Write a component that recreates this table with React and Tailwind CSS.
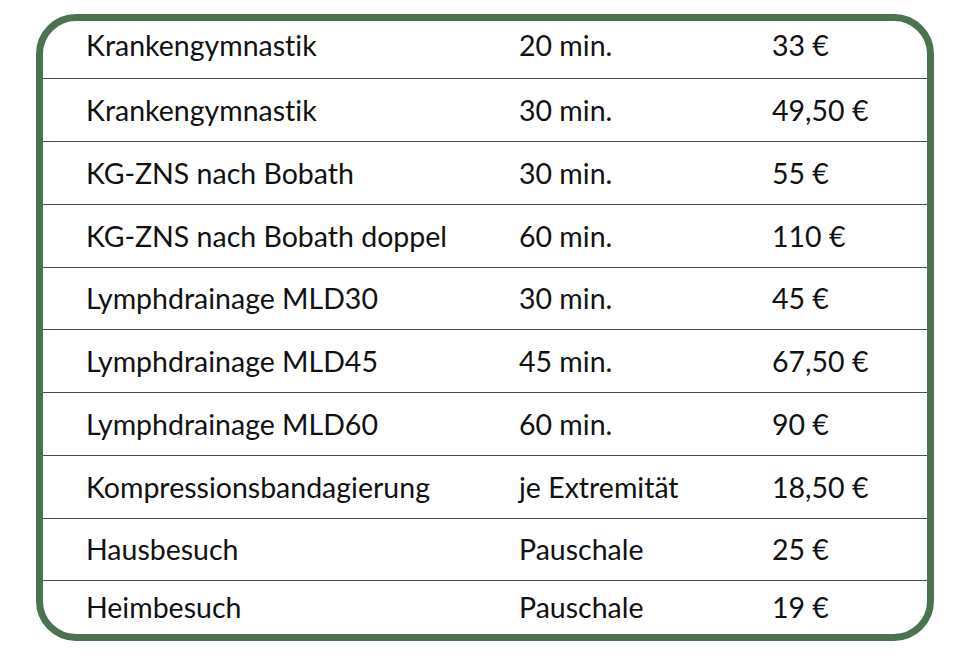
const rows = [
  ['Krankengymnastik', '20 min.', '33 €', 'h-[58px] pb-[8px]'],
  ['Krankengymnastik', '30 min.', '49,50 €', 'h-[63px]'],
  ['KG-ZNS nach Bobath', '30 min.', '55 €', 'h-[63px]'],
  ['KG-ZNS nach Bobath doppel', '60 min.', '110 €', 'h-[63px]'],
  ['Lymphdrainage MLD30', '30 min.', '45 €', 'h-[62px]'],
  ['Lymphdrainage MLD45', '45 min.', '67,50 €', 'h-[63px]'],
  ['Lymphdrainage MLD60', '60 min.', '90 €', 'h-[63px]'],
  ['Kompressionsbandagierung', 'je Extremität', '18,50 €', 'h-[63px]'],
  ['Hausbesuch', 'Pauschale', '25 €', 'h-[62px]'],
  ['Heimbesuch', 'Pauschale', '19 €', 'flex-1'],
];

export default function App() {
  return (
    <div className="w-[960px] h-[660px] bg-white pt-[14px] pl-[36px]">
      <div
        className="w-[898px] h-[627px] rounded-[40px] border-[7px] border-[#4b7350] bg-white flex flex-col overflow-hidden text-[28.5px] text-[#111] [font-variant-ligatures:none]"
        style={{ fontFamily: 'Lato, "Open Sans", sans-serif' }}
      >
        {rows.map(([name, dur, price, h], i) => (
          <div
            key={i}
            className={`${h} flex items-center shrink-0 ${i < rows.length - 1 ? 'border-b border-[#4a4a4a]' : ''}`}
          >
            <span className="w-[476px] pl-[43px] leading-none">{name}</span>
            <span className="w-[253px] leading-none">{dur}</span>
            <span className="leading-none">{price}</span>
          </div>
        ))}
      </div>
    </div>
  );
}
